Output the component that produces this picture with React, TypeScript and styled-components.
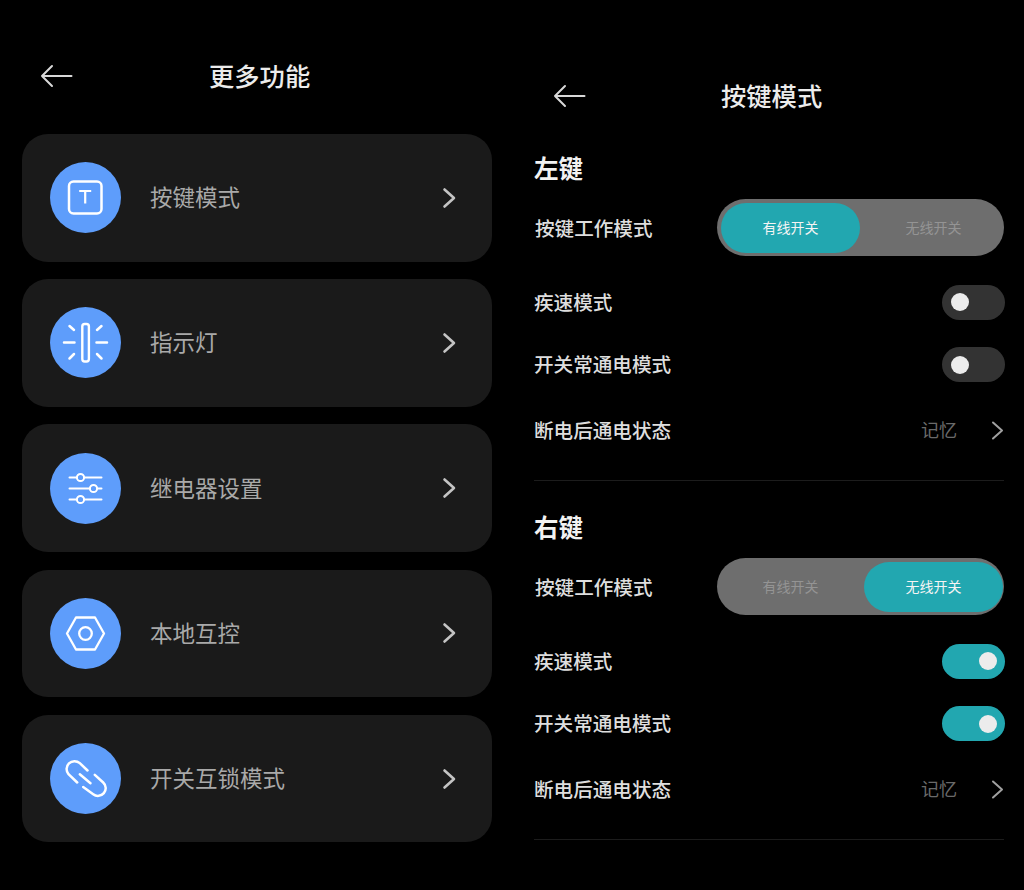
import styled, { createGlobalStyle } from "styled-components";
import type { ReactNode } from "react";

const GlobalStyle = createGlobalStyle`
  html, body {
    margin: 0;
    background: #000;
  }
  body {
    font-family: "Noto Sans CJK SC", "Noto Sans", sans-serif;
  }
`;

const Page = styled.div`
  display: flex;
  width: 1024px;
  height: 890px;
  overflow: hidden;
  background: #000;
`;

const MenuPanel = styled.div`
  width: 512px;
  padding: 52px 20px 0 22px;
  box-sizing: border-box;
`;

const SettingsPanel = styled.div`
  width: 512px;
  padding: 72px 20px 0 22px;
  box-sizing: border-box;
`;

const Header = styled.div<{ $inset: number }>`
  display: flex;
  align-items: center;
  height: 50px;
  padding-left: ${(p) => p.$inset}px;
`;

const BackIcon = styled.svg`
  width: 33px;
  height: 24px;
  flex: none;
  margin-bottom: 2px;
`;

const Title = styled.div<{ $gap: number }>`
  margin-left: ${(p) => p.$gap}px;
  padding-bottom: 3px;
  color: #ececec;
  font-size: 25.3px;
  font-weight: 500;
  line-height: 47px;
`;

const CardList = styled.div`
  display: flex;
  flex-direction: column;
  gap: 17.6px;
  margin-top: 32px;
`;

const Card = styled.div`
  display: flex;
  align-items: center;
  height: 127.6px;
  padding: 0 35px 0 28px;
  border-radius: 26px;
  background: #1a1a1a;
`;

const IconCircle = styled.svg`
  width: 71px;
  height: 71px;
  flex: none;
`;

const CardLabel = styled.div`
  margin-left: 29px;
  padding-bottom: 3px;
  color: #a9a9a9;
  font-size: 22.5px;
`;

const CardChevron = styled.svg`
  width: 16px;
  height: 22px;
  margin-left: auto;
`;

const Section = styled.div`
  padding-top: 25px;
`;

const SectionTitle = styled.div`
  height: 42px;
  margin-bottom: 10px;
  color: #f2f2f2;
  font-size: 24.5px;
  font-weight: 700;
  line-height: 42px;
`;

const ModeRow = styled.div`
  display: flex;
  align-items: center;
  justify-content: space-between;
  height: 57px;
  margin-bottom: 15px;
`;

const Row = styled.div<{ $tall?: boolean }>`
  display: flex;
  align-items: center;
  justify-content: space-between;
  height: ${(p) => (p.$tall ? 68 : 62.5)}px;
`;

const RowLabel = styled.div<{ $indent?: boolean }>`
  padding-left: ${(p) => (p.$indent ? 1 : 0)}px;
  padding-bottom: ${(p) => (p.$indent ? 0 : 2)}px;
  color: #dedede;
  font-size: 19.6px;
  font-weight: 500;
`;

const Segmented = styled.div`
  display: flex;
  align-items: center;
  gap: 4px;
  width: 287px;
  height: 57px;
  padding-left: 4px;
  border-radius: 29px;
  box-sizing: border-box;
  background: #6e6e6e;
`;

const Segment = styled.div<{ $active?: boolean }>`
  width: 139px;
  height: 50px;
  border-radius: 25px;
  background: ${(p) => (p.$active ? "#22a7b0" : "transparent")};
  color: ${(p) => (p.$active ? "#f4f4f4" : "#949494")};
  font-size: 14px;
  line-height: 49px;
  text-align: center;
`;

const Toggle = styled.div<{ $on?: boolean }>`
  display: flex;
  align-items: center;
  justify-content: ${(p) => (p.$on ? "flex-end" : "flex-start")};
  width: 63px;
  height: 35px;
  margin-right: -1px;
  padding: 0 8px 0 9px;
  border-radius: 18px;
  box-sizing: border-box;
  background: ${(p) => (p.$on ? "#22a7b0" : "#333")};
`;

const Knob = styled.div`
  width: 18px;
  height: 18px;
  border-radius: 50%;
  background: #ececec;
`;

const ValueGroup = styled.div`
  display: flex;
  align-items: center;
`;

const Value = styled.div`
  padding-bottom: 2px;
  color: #6a6a6a;
  font-size: 18px;
`;

const ValueChevron = styled.svg`
  width: 14px;
  height: 22px;
  margin-left: 33px;
`;

const Divider = styled.div`
  height: 1px;
  margin-top: 16px;
  background: #1c1c1c;
`;

const BackArrow = () => (
  <BackIcon viewBox="0 0 33 24" fill="none" stroke="#d8d8d8" strokeWidth="2" strokeLinecap="round" strokeLinejoin="round">
    <path d="M31.5 12H2M12 2 2 12l10 10" />
  </BackIcon>
);

const CircleIcon = ({ children }: { children: ReactNode }) => (
  <IconCircle viewBox="-35.5 -35.5 71 71" fill="none" stroke="#fff" strokeWidth="2.2" strokeLinecap="round" strokeLinejoin="round">
    <circle r="35.5" fill="#5e9dfb" stroke="none" />
    {children}
  </IconCircle>
);

const menu: { label: string; icon: ReactNode }[] = [
  {
    label: "按键模式",
    icon: (
      <>
        <rect x="-16.5" y="-16" width="32.5" height="32" rx="4.5" strokeWidth="2.5" />
        <path d="M-6.3-6.500H5.700M-.3-6.500V6" strokeLinecap="butt" strokeWidth="2.2" />
      </>
    ),
  },
  {
    label: "指示灯",
    icon: (
      <>
        <rect x="-3.2" y="-18.5" width="6.6" height="37.5" rx="2.4" strokeWidth="2.4" />
        <path d="M-21.5 0h10.500M11 0h10.500M-16-16.500l4.500 4M16-16.500l-4.500 4M-16 16l4.500-4.500M16 16l-4.500-4.500" strokeWidth="2.5" />
      </>
    ),
  },
  {
    label: "继电器设置",
    icon: (
      <>
        <path d="M-16-11h7.500M-1.500-11H16M-16 0H4.500M12 0h4M-16 11h7.500M-1.500 11H16" strokeWidth="2" />
        <circle cx="-5" cy="-11" r="3.600" strokeWidth="2" />
        <circle cx="8" cy="0" r="3.600" strokeWidth="2" />
        <circle cx="-5" cy="11" r="3.600" strokeWidth="2" />
      </>
    ),
  },
  {
    label: "本地互控",
    icon: (
      <>
        <path d="M-18.500 0-9.500-16h19L18.500 0 9.500 16h-19Z" strokeWidth="2.300" />
        <circle r="6.300" strokeWidth="2.300" />
      </>
    ),
  },
  {
    label: "开关互锁模式",
    icon: (
      <>
        <path d="M2-8-5.700-15.300A7.900 7.900 0 0 0-17-4.300L-8.300 4M9.300-3.700 17.700 4A7.700 7.700 0 0 1 7.700 15.700L-2.300 8.500" strokeWidth="2.500" />
        <path d="M-5.700-4.300 5 4.700" strokeWidth="2.500" />
      </>
    ),
  },
];

const KeySection = ({ name, wireless }: { name: string; wireless: boolean }) => (
  <Section>
    <SectionTitle>{name}</SectionTitle>
    <ModeRow>
      <RowLabel $indent>按键工作模式</RowLabel>
      <Segmented>
        <Segment $active={!wireless}>有线开关</Segment>
        <Segment $active={wireless}>无线开关</Segment>
      </Segmented>
    </ModeRow>
    <Row>
      <RowLabel>疾速模式</RowLabel>
      <Toggle $on={wireless}>
        <Knob />
      </Toggle>
    </Row>
    <Row>
      <RowLabel>开关常通电模式</RowLabel>
      <Toggle $on={wireless}>
        <Knob />
      </Toggle>
    </Row>
    <Row $tall>
      <RowLabel>断电后通电状态</RowLabel>
      <ValueGroup>
        <Value>记忆</Value>
        <ValueChevron viewBox="0 0 14 22" fill="none" stroke="#a0a0a0" strokeWidth="2" strokeLinecap="round" strokeLinejoin="round">
          <path d="M3 3.500l9 8-9 8" />
        </ValueChevron>
      </ValueGroup>
    </Row>
    <Divider />
  </Section>
);

export default function App() {
  return (
    <Page>
      <GlobalStyle />
      <MenuPanel>
        <Header $inset={18}>
          <BackArrow />
          <Title $gap={136}>更多功能</Title>
        </Header>
        <CardList>
          {menu.map((item) => (
            <Card key={item.label}>
              <CircleIcon>{item.icon}</CircleIcon>
              <CardLabel>{item.label}</CardLabel>
              <CardChevron viewBox="0 0 16 22" fill="none" stroke="#c4c4c4" strokeWidth="2.600" strokeLinecap="round" strokeLinejoin="round">
                <path d="M3.500 2.500l9.500 8.500-9.500 8.500" />
              </CardChevron>
            </Card>
          ))}
        </CardList>
      </MenuPanel>
      <SettingsPanel>
        <Header $inset={19}>
          <BackArrow />
          <Title $gap={135}>按键模式</Title>
        </Header>
        <KeySection name="左键" wireless={false} />
        <KeySection name="右键" wireless={true} />
      </SettingsPanel>
    </Page>
  );
}
